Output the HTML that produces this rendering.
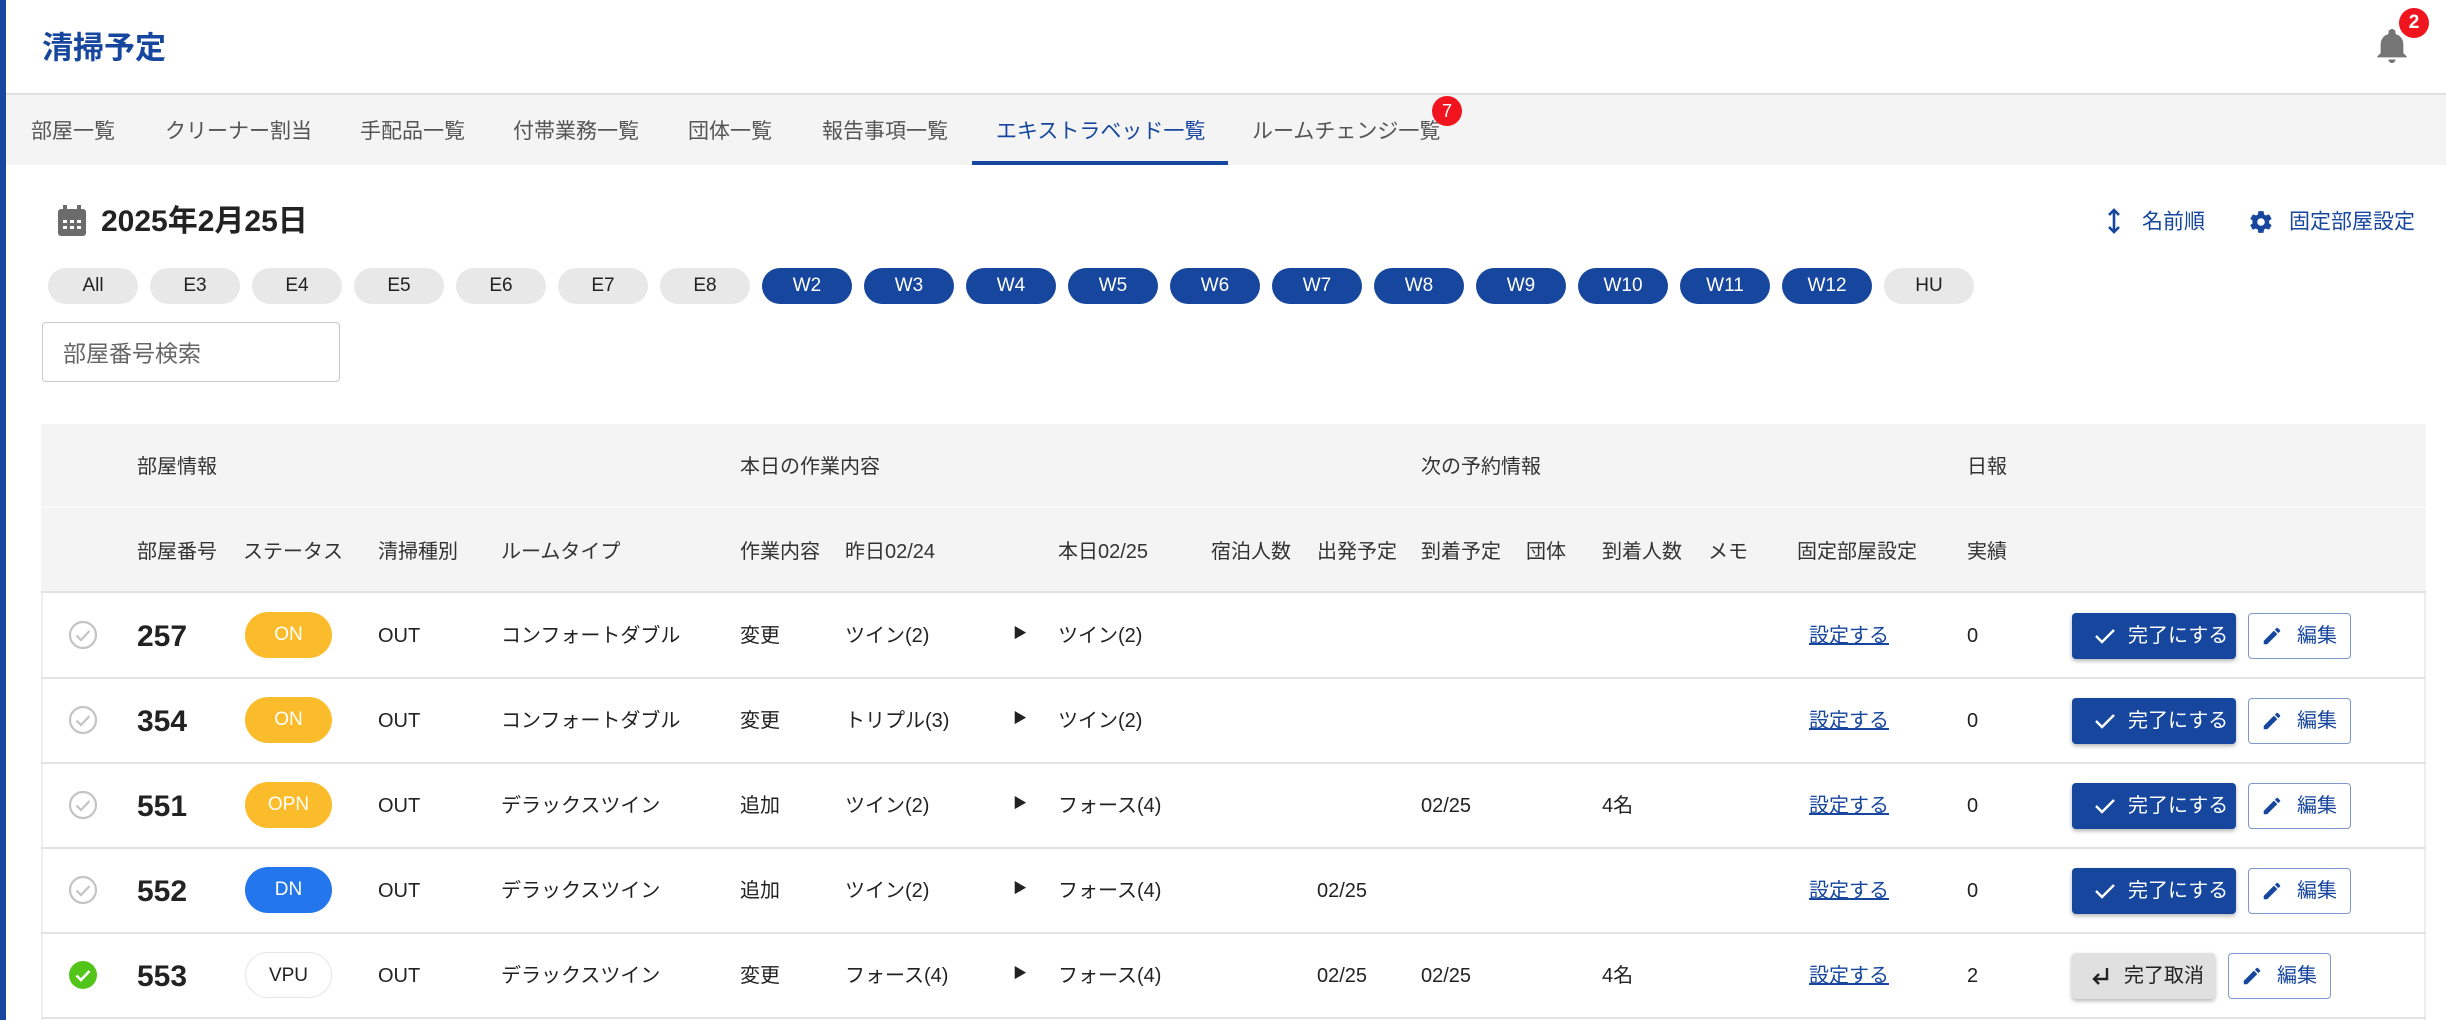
<!DOCTYPE html>
<html><head><meta charset="utf-8">
<style>
*{margin:0;padding:0;box-sizing:border-box}
body{width:2446px;height:1020px;overflow:hidden;background:#fff;position:relative;font-family:"Liberation Sans","Noto Sans CJK JP",sans-serif;color:#222}
.a{position:absolute}
.t{position:absolute;transform:translateY(-50%);white-space:nowrap;font-size:20px;line-height:1}
.tab{position:absolute;top:130px;transform:translateY(-50%);font-size:21px;color:#555;white-space:nowrap}
.chip{position:absolute;top:268px;width:90px;height:36px;border-radius:18px;background:#e8e8e8;color:#222;font-size:19px;text-align:center;line-height:36px}
.chip.b{background:#16469d;color:#fff}
.pill{position:absolute;left:245px;width:87px;height:46px;border-radius:23px;text-align:center;line-height:46px;font-size:19px;color:#fff}
.btn{position:absolute;left:2072px;width:164px;height:46px;border-radius:4px;background:#16469d;color:#fff;font-size:20px;line-height:46px;box-shadow:0 2px 4px rgba(0,0,0,.3)}
.ed{position:absolute;width:103px;height:46px;border:1px solid #7d98cf;border-radius:4px;color:#16469d;font-size:20px;line-height:44px;background:#fff}
.link{color:#16469d;text-decoration:underline}
.hdr{color:#333}
</style></head><body>
<div class="a" style="left:0;top:0;width:6px;height:1020px;background:#16469d"></div>
<div class="t" style="left:42px;top:48px;font-size:31px;font-weight:bold;color:#16469d">清掃予定</div>
<svg class="a" style="left:2375px;top:27px" width="34" height="38" viewBox="0 0 24 26"><path d="M12 25c1.4 0 2.5-1.1 2.5-2.5h-5C9.5 23.9 10.6 25 12 25zm8-7v-6c0-3.6-2-6.6-5.5-7.4V3.5C14.5 2.1 13.4 1 12 1s-2.5 1.1-2.5 2.5v1.1C6 5.4 4 8.4 4 12v6l-2.5 2.5V21h21v-.5L20 18z" fill="#757575"/></svg>
<div class="a" style="left:2399px;top:8px;width:30px;height:30px;border-radius:50%;background:#f0141e;color:#fff;font-size:19px;font-weight:bold;text-align:center;line-height:30px">2</div>
<div class="a" style="left:6px;top:93px;width:2440px;height:72px;background:#f4f4f4;border-top:2px solid #e0e0e0"></div>
<div class="tab" style="left:31px">部屋一覧</div>
<div class="tab" style="left:165px">クリーナー割当</div>
<div class="tab" style="left:360px">手配品一覧</div>
<div class="tab" style="left:513px">付帯業務一覧</div>
<div class="tab" style="left:688px">団体一覧</div>
<div class="tab" style="left:822px">報告事項一覧</div>
<div class="tab" style="left:996px;color:#16469d">エキストラベッド一覧</div>
<div class="a" style="left:972px;top:161px;width:256px;height:4px;background:#16469d"></div>
<div class="tab" style="left:1252px">ルームチェンジ一覧</div>
<div class="a" style="left:1432px;top:96px;width:30px;height:30px;border-radius:50%;background:#f0141e;color:#fff;font-size:18px;text-align:center;line-height:30px">7</div>
<svg class="a" style="left:58px;top:205px" width="28" height="31" viewBox="0 0 28 31"><rect x="0" y="4" width="28" height="27" rx="3" fill="#6b6b6b"/><rect x="5" y="0" width="4" height="7" fill="#6b6b6b"/><rect x="19" y="0" width="4" height="7" fill="#6b6b6b"/><g fill="#fff"><rect x="5" y="15" width="4" height="3"/><rect x="12" y="15" width="4" height="3"/><rect x="19" y="15" width="4" height="3"/><rect x="5" y="21" width="4" height="3"/><rect x="12" y="21" width="4" height="3"/><rect x="19" y="21" width="4" height="3"/></g></svg>
<div class="t" style="left:101px;top:222px;font-size:30px;font-weight:bold;color:#222">2025年2月25日</div>
<svg class="a" style="left:2106px;top:208px" width="16" height="26" viewBox="0 0 16 26"><path d="M8 2v22M3 7l5-5 5 5M3 19l5 5 5-5" stroke="#16469d" stroke-width="2.6" fill="none"/></svg>
<div class="t" style="left:2142px;top:222px;font-size:21px;color:#16469d">名前順</div>
<svg class="a" style="left:2248px;top:209px" width="26" height="26" viewBox="0 0 24 24"><path fill="#16469d" d="M19.4 13c.04-.3.06-.6.06-1s-.02-.7-.06-1l2.1-1.65c.2-.15.25-.42.12-.64l-2-3.46c-.12-.22-.39-.3-.61-.22l-2.49 1c-.52-.4-1.08-.73-1.690-.98l-.38-2.65A.49.49 0 0 0 14 2h-4c-.25 0-.46.18-.49.42l-.38 2.65c-.61.25-1.17.59-1.69.98l-2.49-1c-.23-.09-.49 0-.61.22l-2 3.460c-.13.22-.7.49.12.64L4.57 11c-.4.3-.7.65-.7 1s.2.7.6 1l-2.1 1.65c-.2.15-.25.42-.12.64l2 3.46c.12.22.39.3.61.22l2.49-1c.52.4 1.08.73 1.69.98l.38 2.65c.3.24.24.42.49.42h4c.25 0 .46-.18.49-.42l.38-2.65c.61-.25 1.17-.59 1.69-.98l2.49 1c.23.09.49 0 .61-.22l2-3.46c.12-.22.07-.49-.12-.64L19.4 13zM12 15.5A3.5 3.5 0 1 1 12 8.5a3.5 3.5 0 0 1 0 7z"/></svg>
<div class="t" style="left:2289px;top:222px;font-size:21px;color:#16469d">固定部屋設定</div>

<div class="chip" style="left:48px">All</div>
<div class="chip" style="left:150px">E3</div>
<div class="chip" style="left:252px">E4</div>
<div class="chip" style="left:354px">E5</div>
<div class="chip" style="left:456px">E6</div>
<div class="chip" style="left:558px">E7</div>
<div class="chip" style="left:660px">E8</div>
<div class="chip b" style="left:762px">W2</div>
<div class="chip b" style="left:864px">W3</div>
<div class="chip b" style="left:966px">W4</div>
<div class="chip b" style="left:1068px">W5</div>
<div class="chip b" style="left:1170px">W6</div>
<div class="chip b" style="left:1272px">W7</div>
<div class="chip b" style="left:1374px">W8</div>
<div class="chip b" style="left:1476px">W9</div>
<div class="chip b" style="left:1578px">W10</div>
<div class="chip b" style="left:1680px">W11</div>
<div class="chip b" style="left:1782px">W12</div>
<div class="chip" style="left:1884px">HU</div>

<div class="a" style="left:42px;top:322px;width:298px;height:60px;border:1.5px solid #c8c8c8;border-radius:4px"></div>
<div class="t" style="left:63px;top:354px;font-size:23px;color:#666">部屋番号検索</div>

<div class="a" style="left:41px;top:424px;width:2385px;height:169px;background:#f4f4f4;border-bottom:2px solid #e2e2e2"></div>
<div class="a" style="left:41px;top:506px;width:2385px;height:2px;background:#fafafa"></div>
<div class="a" style="left:41px;top:593px;width:2px;height:427px;background:#eee"></div>
<div class="a" style="left:2424px;top:593px;width:2px;height:427px;background:#eee"></div>
<div class="a" style="left:41px;top:677px;width:2385px;height:2px;background:#e2e2e2"></div>
<div class="a" style="left:41px;top:762px;width:2385px;height:2px;background:#e2e2e2"></div>
<div class="a" style="left:41px;top:847px;width:2385px;height:2px;background:#e2e2e2"></div>
<div class="a" style="left:41px;top:932px;width:2385px;height:2px;background:#e2e2e2"></div>
<div class="a" style="left:41px;top:1017px;width:2385px;height:2px;background:#e2e2e2"></div>

<div class="t hdr" style="left:137px;top:467px">部屋情報</div>
<div class="t hdr" style="left:740px;top:467px">本日の作業内容</div>
<div class="t hdr" style="left:1421px;top:467px">次の予約情報</div>
<div class="t hdr" style="left:1967px;top:467px">日報</div>
<div class="t hdr" style="left:137px;top:552px">部屋番号</div>
<div class="t hdr" style="left:243px;top:552px">ステータス</div>
<div class="t hdr" style="left:378px;top:552px">清掃種別</div>
<div class="t hdr" style="left:501px;top:552px">ルームタイプ</div>
<div class="t hdr" style="left:740px;top:552px">作業内容</div>
<div class="t hdr" style="left:845px;top:552px">昨日02/24</div>
<div class="t hdr" style="left:1058px;top:552px">本日02/25</div>
<div class="t hdr" style="left:1211px;top:552px">宿泊人数</div>
<div class="t hdr" style="left:1317px;top:552px">出発予定</div>
<div class="t hdr" style="left:1421px;top:552px">到着予定</div>
<div class="t hdr" style="left:1526px;top:552px">団体</div>
<div class="t hdr" style="left:1602px;top:552px">到着人数</div>
<div class="t hdr" style="left:1708px;top:552px">メモ</div>
<div class="t hdr" style="left:1797px;top:552px">固定部屋設定</div>
<div class="t hdr" style="left:1967px;top:552px">実績</div>

<svg class="a" style="left:68px;top:620px" width="30" height="30" viewBox="0 0 30 30"><circle cx="15" cy="15" r="13" fill="none" stroke="#c4c4c4" stroke-width="2.2"/><path d="M8.5 15.5l4.5 4.5 8.5-9" fill="none" stroke="#c4c4c4" stroke-width="2.2"/></svg>
<div class="t" style="left:137px;top:637px;font-size:30px;font-weight:bold">257</div>
<div class="pill" style="top:612px;background:#fbbc2c">ON</div>
<div class="t" style="left:378px;top:636px">OUT</div>
<div class="t" style="left:501px;top:636px">コンフォートダブル</div>
<div class="t" style="left:740px;top:636px">変更</div>
<div class="t" style="left:845px;top:636px">ツイン(2)</div>
<div class="t" style="left:1013px;top:633px;font-size:14px">▶</div>
<div class="t" style="left:1058px;top:636px">ツイン(2)</div>
<div class="t link" style="left:1809px;top:636px">設定する</div>
<div class="t" style="left:1967px;top:636px">0</div>
<div class="btn" style="top:613px"><svg class="a" style="left:22px;top:14px" width="22" height="18" viewBox="0 0 22 18"><path d="M2 9l6 6L20 3" fill="none" stroke="#fff" stroke-width="2.4"/></svg><span class="a" style="left:56px">完了にする</span></div>
<div class="ed" style="left:2248px;top:613px"><svg class="a" style="left:12px;top:11px" width="22" height="22" viewBox="0 0 24 24"><path fill="#16469d" d="M3 17.25V21h3.75L17.81 9.94l-3.75-3.75L3 17.25zM20.71 7.04a1 1 0 0 0 0-1.41l-2.34-2.34a1 1 0 0 0-1.41 0l-1.83 1.830 3.75 3.75 1.83-1.83z"/></svg><span class="a" style="left:48px">編集</span></div>

<svg class="a" style="left:68px;top:705px" width="30" height="30" viewBox="0 0 30 30"><circle cx="15" cy="15" r="13" fill="none" stroke="#c4c4c4" stroke-width="2.2"/><path d="M8.5 15.5l4.5 4.5 8.5-9" fill="none" stroke="#c4c4c4" stroke-width="2.2"/></svg>
<div class="t" style="left:137px;top:722px;font-size:30px;font-weight:bold">354</div>
<div class="pill" style="top:697px;background:#fbbc2c">ON</div>
<div class="t" style="left:378px;top:721px">OUT</div>
<div class="t" style="left:501px;top:721px">コンフォートダブル</div>
<div class="t" style="left:740px;top:721px">変更</div>
<div class="t" style="left:845px;top:721px">トリプル(3)</div>
<div class="t" style="left:1013px;top:718px;font-size:14px">▶</div>
<div class="t" style="left:1058px;top:721px">ツイン(2)</div>
<div class="t link" style="left:1809px;top:721px">設定する</div>
<div class="t" style="left:1967px;top:721px">0</div>
<div class="btn" style="top:698px"><svg class="a" style="left:22px;top:14px" width="22" height="18" viewBox="0 0 22 18"><path d="M2 9l6 6L20 3" fill="none" stroke="#fff" stroke-width="2.4"/></svg><span class="a" style="left:56px">完了にする</span></div>
<div class="ed" style="left:2248px;top:698px"><svg class="a" style="left:12px;top:11px" width="22" height="22" viewBox="0 0 24 24"><path fill="#16469d" d="M3 17.25V21h3.75L17.81 9.94l-3.75-3.75L3 17.25zM20.71 7.04a1 1 0 0 0 0-1.41l-2.34-2.34a1 1 0 0 0-1.41 0l-1.83 1.83 3.75 3.75 1.83-1.83z"/></svg><span class="a" style="left:48px">編集</span></div>

<svg class="a" style="left:68px;top:790px" width="30" height="30" viewBox="0 0 30 30"><circle cx="15" cy="15" r="13" fill="none" stroke="#c4c4c4" stroke-width="2.2"/><path d="M8.5 15.5l4.5 4.5 8.5-9" fill="none" stroke="#c4c4c4" stroke-width="2.2"/></svg>
<div class="t" style="left:137px;top:807px;font-size:30px;font-weight:bold">551</div>
<div class="pill" style="top:782px;background:#fbbc2c">OPN</div>
<div class="t" style="left:378px;top:806px">OUT</div>
<div class="t" style="left:501px;top:806px">デラックスツイン</div>
<div class="t" style="left:740px;top:806px">追加</div>
<div class="t" style="left:845px;top:806px">ツイン(2)</div>
<div class="t" style="left:1013px;top:803px;font-size:14px">▶</div>
<div class="t" style="left:1058px;top:806px">フォース(4)</div>
<div class="t" style="left:1421px;top:806px">02/25</div>
<div class="t" style="left:1602px;top:806px">4名</div>
<div class="t link" style="left:1809px;top:806px">設定する</div>
<div class="t" style="left:1967px;top:806px">0</div>
<div class="btn" style="top:783px"><svg class="a" style="left:22px;top:14px" width="22" height="18" viewBox="0 0 22 18"><path d="M2 9l6 6L20 3" fill="none" stroke="#fff" stroke-width="2.4"/></svg><span class="a" style="left:56px">完了にする</span></div>
<div class="ed" style="left:2248px;top:783px"><svg class="a" style="left:12px;top:11px" width="22" height="22" viewBox="0 0 24 24"><path fill="#16469d" d="M3 17.25V21h3.75L17.81 9.94l-3.75-3.75L3 17.25zM20.71 7.04a1 1 0 0 0 0-1.41l-2.34-2.34a1 1 0 0 0-1.41 0l-1.83 1.83 3.75 3.75 1.83-1.83z"/></svg><span class="a" style="left:48px">編集</span></div>

<svg class="a" style="left:68px;top:875px" width="30" height="30" viewBox="0 0 30 30"><circle cx="15" cy="15" r="13" fill="none" stroke="#c4c4c4" stroke-width="2.2"/><path d="M8.5 15.5l4.5 4.5 8.5-9" fill="none" stroke="#c4c4c4" stroke-width="2.2"/></svg>
<div class="t" style="left:137px;top:892px;font-size:30px;font-weight:bold">552</div>
<div class="pill" style="top:867px;background:#2476ec">DN</div>
<div class="t" style="left:378px;top:891px">OUT</div>
<div class="t" style="left:501px;top:891px">デラックスツイン</div>
<div class="t" style="left:740px;top:891px">追加</div>
<div class="t" style="left:845px;top:891px">ツイン(2)</div>
<div class="t" style="left:1013px;top:888px;font-size:14px">▶</div>
<div class="t" style="left:1058px;top:891px">フォース(4)</div>
<div class="t" style="left:1317px;top:891px">02/25</div>
<div class="t link" style="left:1809px;top:891px">設定する</div>
<div class="t" style="left:1967px;top:891px">0</div>
<div class="btn" style="top:868px"><svg class="a" style="left:22px;top:14px" width="22" height="18" viewBox="0 0 22 18"><path d="M2 9l6 6L20 3" fill="none" stroke="#fff" stroke-width="2.4"/></svg><span class="a" style="left:56px">完了にする</span></div>
<div class="ed" style="left:2248px;top:868px"><svg class="a" style="left:12px;top:11px" width="22" height="22" viewBox="0 0 24 24"><path fill="#16469d" d="M3 17.25V21h3.75L17.81 9.94l-3.75-3.75L3 17.25zM20.71 7.04a1 1 0 0 0 0-1.41l-2.34-2.34a1 1 0 0 0-1.41 0l-1.83 1.83 3.75 3.75 1.83-1.83z"/></svg><span class="a" style="left:48px">編集</span></div>

<svg class="a" style="left:68px;top:960px" width="30" height="30" viewBox="0 0 30 30"><circle cx="15" cy="15" r="14" fill="#52c41a"/><path d="M8.5 15.5l4.5 4.5 8.5-9" fill="none" stroke="#fff" stroke-width="2.6"/></svg>
<div class="t" style="left:137px;top:977px;font-size:30px;font-weight:bold">553</div>
<div class="pill" style="top:952px;background:#fff;border:1px solid #e6e6e6;color:#222">VPU</div>
<div class="t" style="left:378px;top:976px">OUT</div>
<div class="t" style="left:501px;top:976px">デラックスツイン</div>
<div class="t" style="left:740px;top:976px">変更</div>
<div class="t" style="left:845px;top:976px">フォース(4)</div>
<div class="t" style="left:1013px;top:973px;font-size:14px">▶</div>
<div class="t" style="left:1058px;top:976px">フォース(4)</div>
<div class="t" style="left:1317px;top:976px">02/25</div>
<div class="t" style="left:1421px;top:976px">02/25</div>
<div class="t" style="left:1602px;top:976px">4名</div>
<div class="t link" style="left:1809px;top:976px">設定する</div>
<div class="t" style="left:1967px;top:976px">2</div>
<div class="btn" style="top:953px;width:143px;background:#e0e0e0;color:#222"><svg class="a" style="left:18px;top:12px" width="22" height="22" viewBox="0 0 22 22"><path d="M17 3v11H4M9 9l-5 5 5 5" fill="none" stroke="#222" stroke-width="2.4"/></svg><span class="a" style="left:52px">完了取消</span></div>
<div class="ed" style="left:2228px;top:953px"><svg class="a" style="left:12px;top:11px" width="22" height="22" viewBox="0 0 24 24"><path fill="#16469d" d="M3 17.25V21h3.75L17.81 9.94l-3.75-3.75L3 17.25zM20.71 7.04a1 1 0 0 0 0-1.41l-2.34-2.34a1 1 0 0 0-1.41 0l-1.83 1.83 3.75 3.75 1.83-1.83z"/></svg><span class="a" style="left:48px">編集</span></div>
</body></html>
